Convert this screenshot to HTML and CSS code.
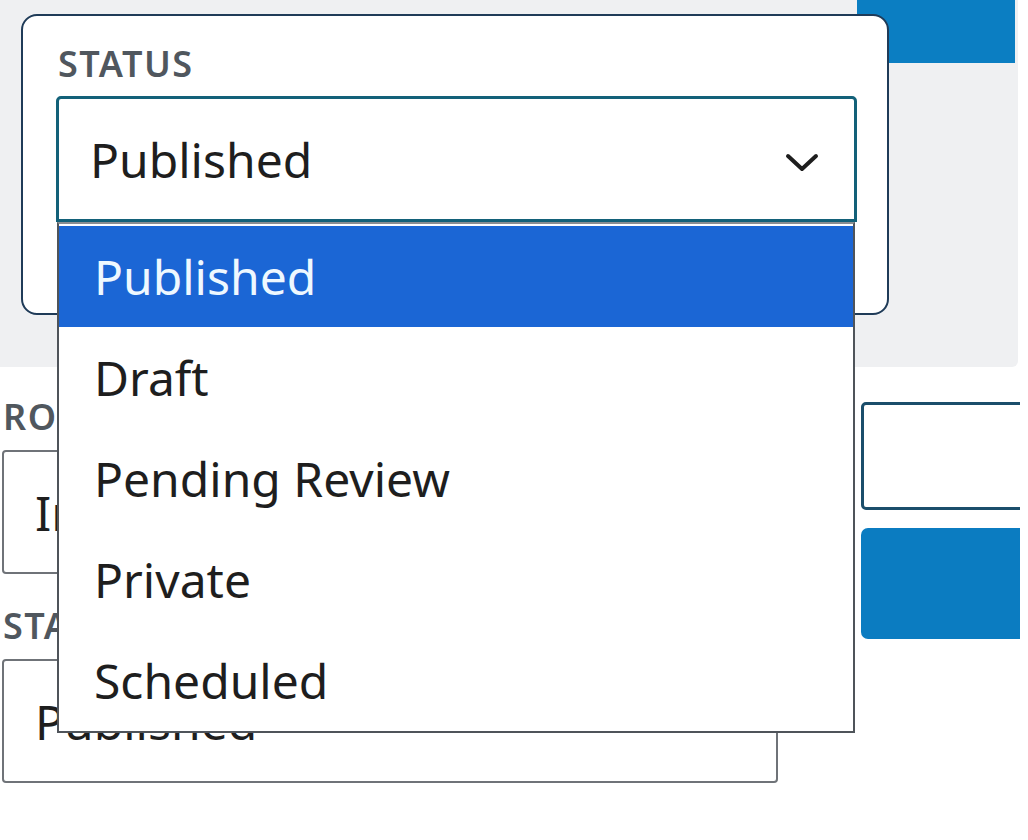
FILE: index.html
```html
<!DOCTYPE html>
<html lang="en">
<head>
<meta charset="utf-8">
<title>Status</title>
<link rel="stylesheet" href="styles.css">
</head>
<body>
<div class="viewport">
  <div class="backdrop">
    <div class="top-zone">
      <div class="top-button"></div>
    </div>
    <div class="form-zone">
      <div class="form-left">
        <div class="field-label">ROLE</div>
        <div class="field-box">Inherit</div>
        <div class="field-label">STATUS</div>
        <div class="field-box">Published</div>
      </div>
      <div class="form-right">
        <div class="side-input"></div>
        <div class="side-button"></div>
      </div>
    </div>
  </div>

  <div class="popover">
    <div class="field-label">STATUS</div>
    <div class="select-box">
      <span class="select-value">Published</span>
      <svg class="chevron" width="34" height="19" viewBox="0 0 34 19" aria-hidden="true">
        <polyline points="3,3 17,16 31,3" fill="none" stroke="#1e1e1e" stroke-width="4" stroke-linecap="round" stroke-linejoin="round"/>
      </svg>
    </div>
  </div>

  <ul class="listbox">
    <li class="option selected">Published</li>
    <li class="option">Draft</li>
    <li class="option">Pending Review</li>
    <li class="option">Private</li>
    <li class="option">Scheduled</li>
  </ul>
</div>
</body>
</html>
```

FILE: styles.css
```css
html, body {
  margin: 0;
  padding: 0;
  background: #ffffff;
}

body {
  width: 1028px;
  height: 840px;
  overflow: hidden;
  font-family: "Noto Sans", "Open Sans", sans-serif;
  color: #1e1e1e;
}

.viewport {
  position: relative;
  width: 1020px;
  height: 840px;
  overflow: hidden;
  background: #ffffff;
}

.backdrop {
  display: flex;
  flex-direction: column;
}

.top-zone {
  width: 1018px;
  height: 367px;
  background: #eff0f2;
  border-bottom-right-radius: 6px;
  display: flex;
  justify-content: flex-end;
  align-items: flex-start;
  box-sizing: border-box;
  padding-right: 3px;
}

.top-button {
  width: 158px;
  height: 63px;
  background: #0b7ec2;
}

.form-zone {
  display: grid;
  grid-template-columns: 776px 220px;
  column-gap: 83px;
  padding-left: 2px;
}

.form-left {
  display: flex;
  flex-direction: column;
}

.field-label {
  font-size: 36px;
  line-height: 36px;
  font-weight: 600;
  letter-spacing: 1.5px;
  color: #50575e;
}

.form-left .field-label:first-child {
  margin-top: 32px;
}

.form-left .field-label {
  margin-top: 34px;
  margin-bottom: 15px;
  padding-left: 1px;
}

.field-box {
  box-sizing: border-box;
  height: 124px;
  border: 2px solid #6f7378;
  border-radius: 4px;
  display: flex;
  align-items: center;
  padding-left: 31px;
  font-size: 48px;
  color: #1e1e1e;
  background: #ffffff;
}

.form-right {
  display: flex;
  flex-direction: column;
  gap: 18px;
  padding-top: 35px;
}

.side-input {
  box-sizing: border-box;
  height: 108px;
  border: 3px solid #1b4e6b;
  border-radius: 5px;
  background: #ffffff;
}

.side-button {
  height: 111px;
  border-radius: 7px;
  background: #0b7cc1;
}

.popover {
  position: absolute;
  left: 21px;
  top: 14px;
  width: 868px;
  height: 301px;
  box-sizing: border-box;
  border: 2px solid #1f3b58;
  border-radius: 16px;
  background: #ffffff;
  padding: 30px 0 0 33px;
}

.popover .field-label {
  padding-left: 2px;
  margin-bottom: 14px;
}

.select-box {
  box-sizing: border-box;
  width: 801px;
  height: 126px;
  border: 3px solid #136179;
  border-radius: 5px 5px 0 0;
  display: flex;
  align-items: center;
  justify-content: space-between;
  padding: 0 35px 0 31px;
  background: #ffffff;
}

.select-value {
  font-size: 48px;
  color: #1e1e1e;
}

.chevron {
  display: block;
  margin-top: 6px;
}

.listbox {
  position: absolute;
  left: 57px;
  top: 222px;
  width: 798px;
  margin: 0;
  padding: 2px 0 0;
  list-style: none;
  box-sizing: border-box;
  border: 2px solid #4f545a;
  border-top-color: #8a8e93;
  background: #ffffff;
}

.option {
  height: 101px;
  line-height: 101px;
  padding-left: 35px;
  font-size: 48px;
  color: #1e1e1e;
}

.option.selected {
  background: #1b66d5;
  color: #eef8ff;
}
```
